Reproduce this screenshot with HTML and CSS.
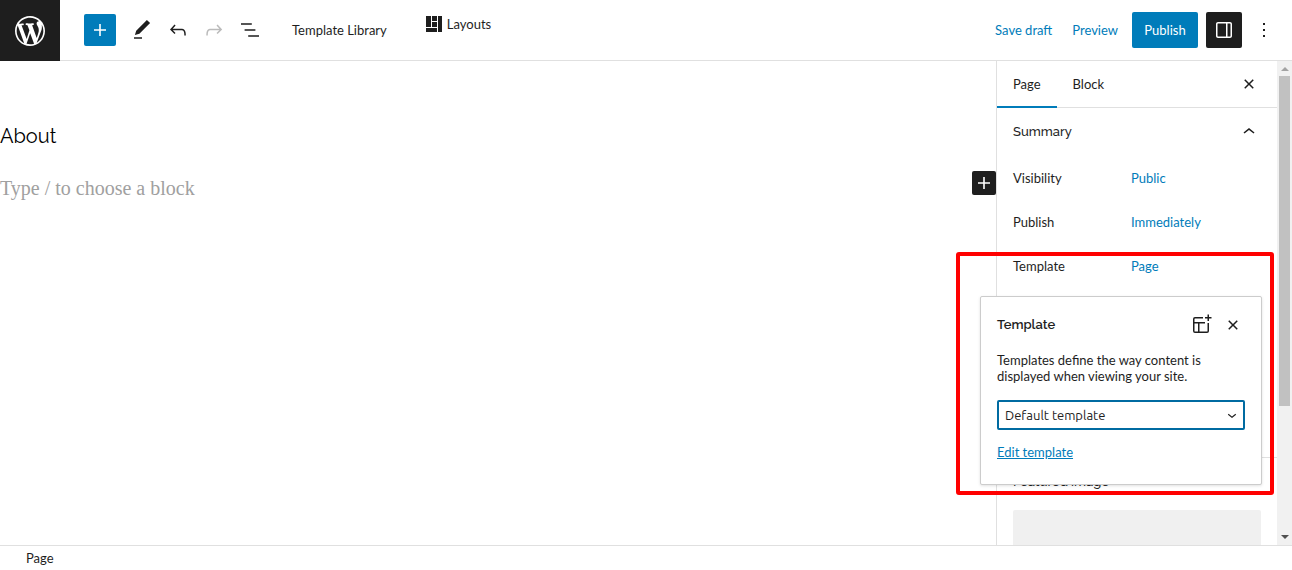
FILE: index.html
```
<!DOCTYPE html>
<html lang="en">

<head>
    <meta charset="UTF-8">
    <meta name="viewport" content="width=device-width, initial-scale=1.0">
    <title>Edit Page - About</title>
    <link rel="stylesheet" href="styles.css">
</head>

<body>

    <header class="header">
        <a class="logo" href="#" aria-label="View Pages">
            <svg width="36" height="36" viewBox="-2 -2 24 24"><path d="M20 10c0-5.51-4.49-10-10-10C4.48 0 0 4.49 0 10c0 5.52 4.48 10 10 10 5.51 0 10-4.48 10-10zM7.78 15.37L4.37 6.22c.55-.02 1.17-.08 1.17-.08.5-.06.44-1.13-.06-1.11 0 0-1.45.11-2.37.11-.18 0-.37 0-.58-.01C4.12 2.69 6.87 1.11 10 1.11c2.33 0 4.45.87 6.05 2.34-.68-.11-1.65.39-1.65 1.58 0 .74.45 1.36.9 2.1.35.61.55 1.36.55 2.46 0 1.49-1.4 5-1.4 5l-3.03-8.37c.54-.02.82-.17.82-.17.5-.05.44-1.25-.06-1.22 0 0-1.44.12-2.38.12-.87 0-2.33-.12-2.33-.12-.5-.03-.56 1.2-.06 1.22l.92.08 1.26 3.41zM17.41 10c.24-.64.74-1.87.43-4.25.7 1.29 1.05 2.71 1.05 4.25 0 3.29-1.73 6.24-4.4 7.78.97-2.59 1.94-5.2 2.92-7.78zM6.1 18.09C3.12 16.65 1.11 13.53 1.11 10c0-1.3.23-2.48.72-3.59C3.25 10.3 4.67 14.2 6.1 18.09zm4.03-6.63l2.58 6.98c-.86.29-1.76.45-2.71.45-.79 0-1.57-.11-2.29-.33.81-2.38 1.62-4.74 2.42-7.1z" /></svg>
        </a>
        <div class="toolbar">
            <button class="inserter" aria-label="Toggle block inserter">
                <svg width="24" height="24" viewBox="0 0 24 24"><path d="M18 11.2h-5.2V6h-1.6v5.2H6v1.6h5.2V18h1.6v-5.2H18z" /></svg>
            </button>
            <div class="tools">
                <button class="icon-button" aria-label="Tools">
                    <svg width="24" height="24" viewBox="0 0 24 24"><path d="M20.1 5.1L16.9 2 6.2 12.7l-1.3 4.4 4.5-1.3L20.1 5.1zM4 20.8h8v-1.5H4v1.5z" /></svg>
                </button>
                <button class="icon-button" aria-label="Undo">
                    <svg width="24" height="24" viewBox="0 0 24 24"><path d="M18.3 11.7c-.6-.6-1.4-.9-2.3-.9H6.7l2.9-3.3-1.1-1-4.5 5L8.5 16l1-1-2.7-2.7H16c.5 0 .9.2 1.3.5 1 1 1 3.4 1 4.5v.3h1.5v-.2c0-1.5 0-4.3-1.5-5.7z" /></svg>
                </button>
                <button class="icon-button" aria-label="Redo" disabled>
                    <svg width="24" height="24" viewBox="0 0 24 24"><path d="M15.6 6.5l-1.1 1 2.9 3.3H8c-.9 0-1.7.3-2.3.9-1.4 1.5-1.4 4.2-1.4 5.6v.2h1.5v-.3c0-1.1 0-3.5 1-4.5.3-.3.7-.5 1.3-.5h9.2L14.5 15l1.1 1.1 4.6-4.6-4.6-5z" /></svg>
                </button>
                <button class="icon-button" aria-label="List View">
                    <svg width="24" height="24" viewBox="0 0 24 24"><path d="M13.8 5.2H3v1.5h10.8V5.2zm-3.6 12v1.5H21v-1.5H10.2zm7.2-6H6.6v1.5h10.8v-1.5z" /></svg>
                </button>
            </div>
            <button class="text-button library">Template Library</button>
            <button class="text-button layouts">
                <svg width="16" height="16" viewBox="0 0 16 16"><path d="M0 0h5v11H0zM6 0h5v5H6zM6 6h5v5H6zM0 12h11v4H0zM12 0h4v16h-4z" /></svg>
                Layouts
            </button>
        </div>
        <div class="settings">
            <button class="text-button link">Save draft</button>
            <button class="text-button link preview">Preview</button>
            <button class="publish">Publish</button>
            <button class="toggle" aria-label="Settings">
                <svg width="24" height="24" viewBox="0 0 24 24"><path d="M18 4H6c-1.1 0-2 .9-2 2v12c0 1.1.9 2 2 2h12c1.1 0 2-.9 2-2V6c0-1.1-.9-2-2-2zm-4 14.5H6c-.3 0-.5-.2-.5-.5V6c0-.3.2-.5.5-.5h8v13zm4.5-.5c0 .3-.2.5-.5.5h-2.5v-13H18c.3 0 .5.2.5.5v12z" /></svg>
            </button>
            <button class="more" aria-label="Options">
                <svg width="24" height="24" viewBox="0 0 24 24"><path d="M13 19h-2v-2h2v2zm0-6h-2v-2h2v2zm0-6h-2V5h2v2z" /></svg>
            </button>
        </div>
    </header>

    <div class="editor">
        <main class="canvas">
            <h1 class="post-title">About</h1>
            <div class="block">
                <p class="placeholder">Type / to choose a block</p>
                <button class="add-block" aria-label="Add block">
                    <svg width="24" height="24" viewBox="0 0 24 24"><path d="M18 11.2h-5.2V6h-1.6v5.2H6v1.6h5.2V18h1.6v-5.2H18z" /></svg>
                </button>
            </div>
        </main>

        <aside class="sidebar">
            <div class="tabs">
                <button class="tab active">Page</button>
                <button class="tab">Block</button>
                <button class="close" aria-label="Close settings">
                    <svg width="24" height="24" viewBox="0 0 24 24"><path d="M12 13.06l3.712 3.713 1.061-1.06L13.061 12l3.712-3.712-1.06-1.06L12 10.938 8.288 7.227l-1.061 1.06L10.939 12l-3.712 3.712 1.06 1.061L12 13.061z" /></svg>
                </button>
            </div>
            <section class="panel summary">
                <button class="panel-title">
                    Summary
                    <svg width="24" height="24" viewBox="0 0 24 24"><path d="M6.5 12.4L12 8l5.5 4.4-.9 1.2L12 10l-4.5 3.6-1-1.2z" /></svg>
                </button>
                <div class="row">
                    <span>Visibility</span>
                    <button class="text-button link">Public</button>
                </div>
                <div class="row">
                    <span>Publish</span>
                    <button class="text-button link">Immediately</button>
                </div>
                <div class="row template-row">
                    <span>Template</span>
                    <button class="text-button link">Page</button>

                    <div class="highlight"></div>
                    <div class="popover">
                        <div class="popover-header">
                            <h2>Template</h2>
                            <button class="popover-icon" aria-label="Add template">
                                <svg width="24" height="24" viewBox="0 0 24 24"><path d="M18.5 5.5V8H20V5.5h2.5V4H20V1.5h-1.5V4H16v1.5h2.5zM14 4H6a2 2 0 0 0-2 2v12a2 2 0 0 0 2 2h12a2 2 0 0 0 2-2v-8h-1.5v8a.5.5 0 0 1-.5.5h-7.5v-8H16V9H5.500V6a.5.5 0 0 1 .5-.5h8V4zM9 10.500v8H6a.5.5 0 0 1-.5-.5v-7.500H9z" /></svg>
                            </button>
                            <button class="popover-icon" aria-label="Close">
                                <svg width="24" height="24" viewBox="0 0 24 24"><path d="M12 13.06l3.712 3.713 1.061-1.06L13.061 12l3.712-3.712-1.06-1.06L12 10.938 8.288 7.227l-1.061 1.06L10.939 12l-3.712 3.712 1.06 1.061L12 13.061z" /></svg>
                            </button>
                        </div>
                        <p>Templates define the way content is displayed when viewing your site.</p>
                        <div class="select">
                            <select aria-label="Template">
                                <option>Default template</option>
                            </select>
                            <svg width="18" height="18" viewBox="0 0 24 24"><path d="M17.5 11.6L12 16l-5.5-4.4.9-1.2L12 14l4.5-3.6 1 1.2z" /></svg>
                        </div>
                        <a class="edit-link" href="#">Edit template</a>
                    </div>
                </div>
            </section>
            <section class="panel">
                <button class="panel-title featured-title">Featured image</button>
                <div class="featured"></div>
            </section>
        </aside>

        <div class="scrollbar">
            <svg width="15" height="15" viewBox="0 0 15 15"><path class="arrow-off" d="M4 10h8L8 6z" /></svg>
            <div class="thumb"></div>
            <svg width="15" height="15" viewBox="0 0 15 15"><path class="arrow" d="M4 5h8L8 9z" /></svg>
        </div>
    </div>

    <footer class="footer">Page</footer>

</body>

</html>
```
FILE: styles.css
```
* {
    box-sizing: border-box;
}

body {
    margin: 0;
    height: 100vh;
    display: flex;
    flex-direction: column;
    overflow: hidden;
    background: #fff;
    color: #1e1e1e;
    font-family: Lato, sans-serif;
    font-size: 13px;
    line-height: 16px;
}

button {
    display: flex;
    align-items: center;
    justify-content: center;
    padding: 0;
    border: none;
    background: none;
    color: inherit;
    font: inherit;
    cursor: pointer;
}

svg {
    display: block;
    flex-shrink: 0;
    fill: currentColor;
}

/* Top bar */
.header {
    flex-shrink: 0;
    display: flex;
    align-items: center;
    height: 61px;
    border-bottom: 1px solid #e0e0e0;
}

.logo {
    display: flex;
    align-items: center;
    justify-content: center;
    width: 60px;
    height: 61px;
    margin-bottom: -1px;
    background: #1e1e1e;
    color: #fff;
}

.toolbar {
    flex: 1;
    display: flex;
    align-items: center;
    padding-left: 24px;
}

.inserter {
    width: 32px;
    height: 32px;
    border-radius: 2px;
    background: #007cba;
    color: #fff;
}

.tools {
    display: flex;
    margin: 0 24px 0 8px;
}

.icon-button {
    width: 36px;
    height: 36px;
}

.icon-button:disabled {
    color: #bbb;
}

.layouts {
    gap: 5px;
    margin: 0 0 12px 39px;
}

.settings {
    display: flex;
    align-items: center;
    gap: 8px;
    padding-right: 14px;
}

.link {
    color: #007cba;
}

.preview {
    margin: 0 6px 0 12px;
}

.publish {
    min-width: 66px;
    height: 36px;
    padding: 0 12px;
    border-radius: 2px;
    background: #007cba;
    color: #fff;
}

.toggle {
    width: 36px;
    height: 36px;
    border-radius: 2px;
    background: #1e1e1e;
    color: #fff;
}

.more {
    width: 28px;
    height: 36px;
}

/* Canvas */
.editor {
    flex: 1;
    display: flex;
    min-height: 0;
    overflow: hidden;
}

.canvas {
    flex: 1;
    padding-top: 60px;
}

.post-title {
    margin: 0 0 24px;
    color: #000;
    font-family: Raleway, Lato, sans-serif;
    font-size: 20px;
    font-weight: 400;
    line-height: 30px;
}

.block {
    display: flex;
    justify-content: space-between;
}

.placeholder {
    margin: 0;
    color: #a0a0a0;
    font-family: "Liberation Serif", serif;
    font-size: 20px;
    line-height: 26px;
}

.add-block {
    width: 24px;
    height: 24px;
    margin-top: -4px;
    border-radius: 2px;
    background: #1e1e1e;
    color: #fff;
}

/* Sidebar */
.sidebar {
    width: 281px;
    border-left: 1px solid #e0e0e0;
}

.tabs {
    display: flex;
    height: 47px;
    border-bottom: 1px solid #e0e0e0;
}

.tab {
    height: 47px;
    padding: 0 16px 2px;
}

.tab.active {
    box-shadow: inset 0 -2px #007cba;
}

.close {
    margin: 0 16px 0 auto;
}

.panel {
    padding: 0 16px;
}

.summary {
    height: 350px;
    border-bottom: 1px solid #e0e0e0;
}

.panel-title {
    justify-content: space-between;
    width: 100%;
    height: 48px;
    font-family: Raleway, Montserrat, Inter, sans-serif;
    font-weight: 500;
}

.featured-title {
    height: 52px;
    padding-bottom: 4px;
}

.row {
    display: flex;
    align-items: center;
    height: 44px;
}

.row span {
    width: 118px;
}

.template-row {
    position: relative;
}

.featured {
    height: 80px;
    border-radius: 2px;
    background: #f0f0f0;
}

/* Template popover */
.highlight {
    position: absolute;
    top: 8px;
    left: -57px;
    right: -13px;
    height: 243px;
    border: 4px solid #f00;
    border-radius: 3px;
    z-index: 2;
}

.popover {
    position: absolute;
    top: 52px;
    left: -33px;
    right: -1px;
    padding: 16px;
    border: 1px solid #ccc;
    border-radius: 2px;
    background: #fff;
    box-shadow: 0 1px 3px rgba(0, 0, 0, 0.12);
}

.popover-header {
    display: flex;
    align-items: center;
    gap: 8px;
    height: 24px;
}

.popover h2 {
    flex: 1;
    margin: 0;
    font-family: Raleway, Montserrat, Inter, sans-serif;
    font-size: 13px;
    font-weight: 600;
}

.popover p {
    margin: 15px 0 16px;
}

.select {
    position: relative;
}

.select select {
    display: block;
    width: 100%;
    height: 30px;
    padding: 0 24px 0 6px;
    border: 2px solid #006ba1;
    border-radius: 2px;
    appearance: none;
    background: #fff;
    color: #1e1e1e;
    font-family: Ubuntu, "Noto Sans", sans-serif;
    font-size: 13px;
}

.select svg {
    position: absolute;
    top: 6px;
    right: 4px;
    pointer-events: none;
}

.edit-link {
    display: inline-block;
    margin: 14px 0 8px;
    color: #007cba;
}

/* Scrollbar track */
.scrollbar {
    display: flex;
    flex-direction: column;
    width: 15px;
    background: #f1f1f1;
}

.thumb {
    height: 330px;
    margin: 0 2px auto;
    background: #c1c1c1;
}

.arrow {
    fill: #505050;
}

.arrow-off {
    fill: #a3a3a3;
}

/* Breadcrumb */
.footer {
    flex-shrink: 0;
    height: 25px;
    padding: 4px 26px;
    border-top: 1px solid #e0e0e0;
}
```
